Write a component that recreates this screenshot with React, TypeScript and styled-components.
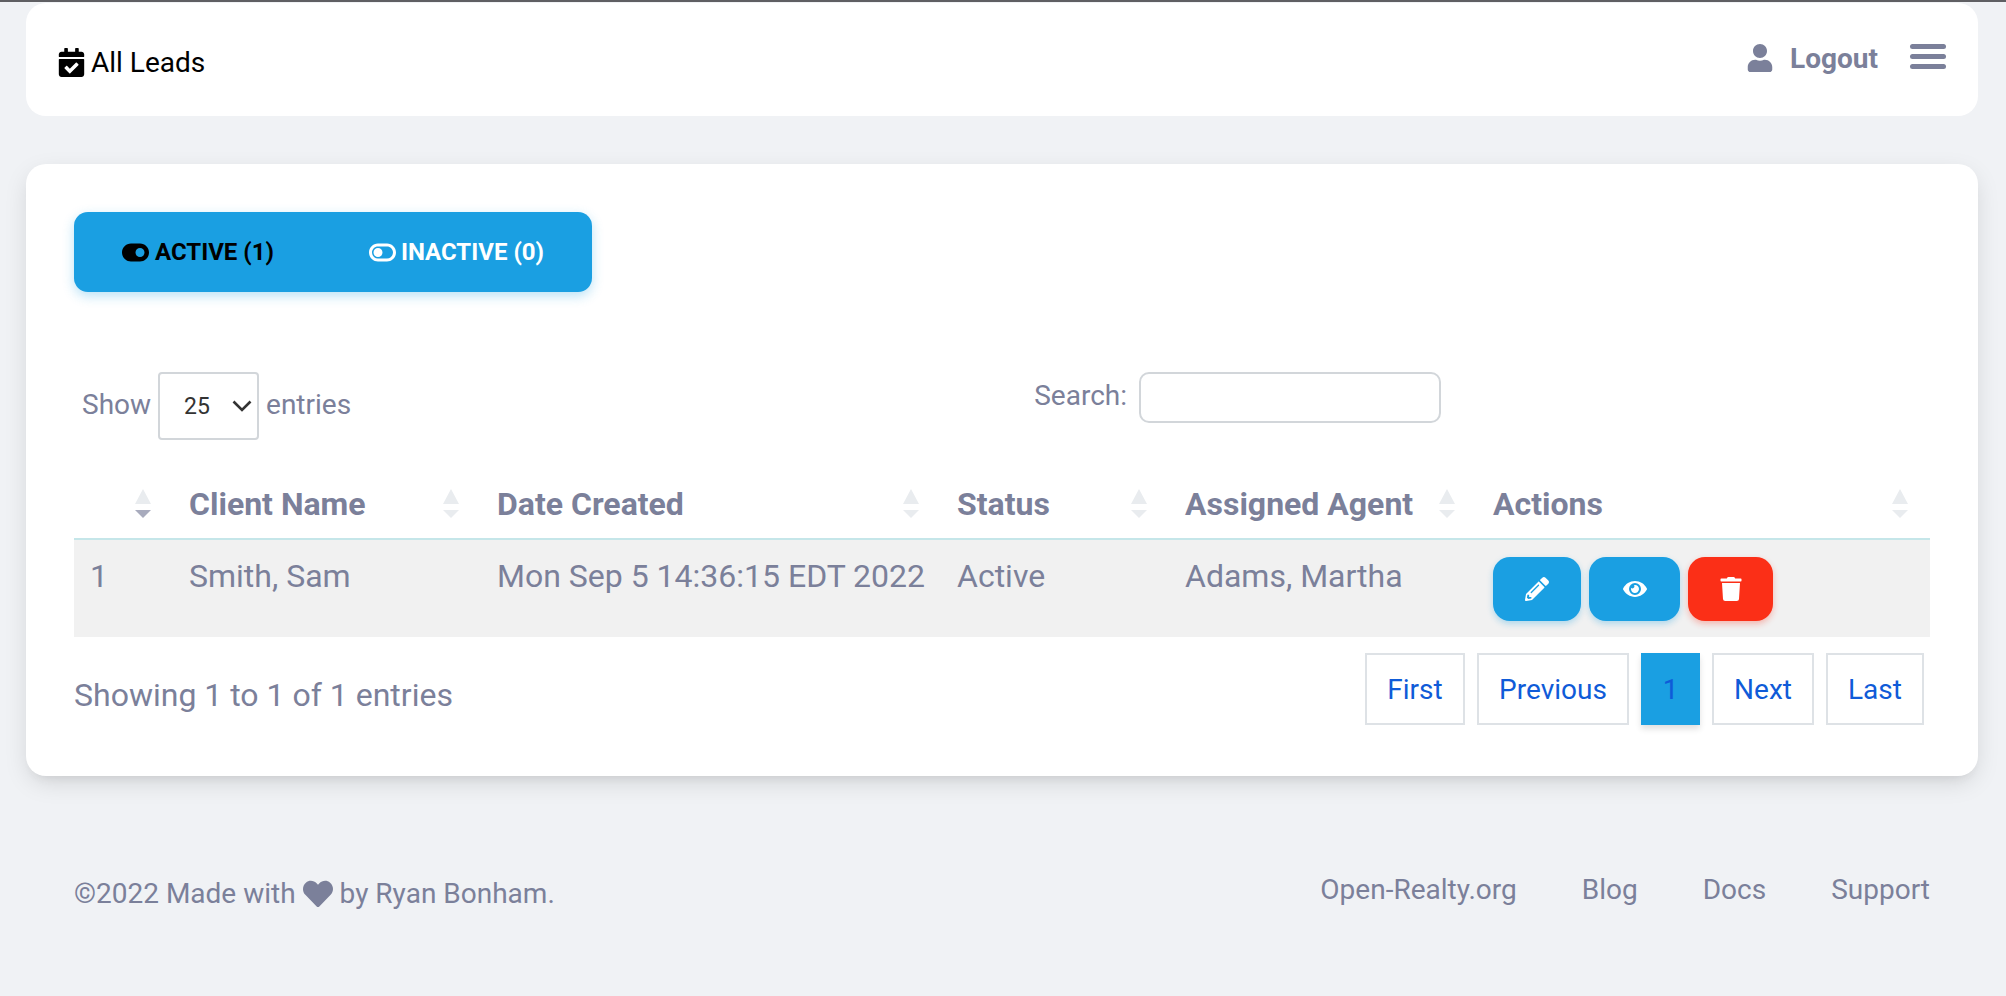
import styled, { createGlobalStyle } from 'styled-components';
import { FaCalendarCheck, FaEye, FaHeart, FaPencilAlt, FaTrash, FaUser } from 'react-icons/fa';
import { FaToggleOff, FaToggleOn } from 'react-icons/fa6';

const GlobalStyle = createGlobalStyle`
  html, body {
    margin: 0;
    padding: 0;
    background: #f0f2f5;
  }
  body {
    font-family: Roboto, "Liberation Sans", sans-serif;
    color: #7b809a;
  }
  * {
    box-sizing: border-box;
  }
`;

const Page = styled.div`
  min-height: 996px;
  border-top: 2px solid #5f5f63;
  padding: 1px 28px 0 26px;
`;

const Header = styled.header`
  height: 113px;
  background: #fff;
  border-radius: 20px;
  display: flex;
  align-items: center;
  justify-content: space-between;
  padding: 0 32px 0 32px;
`;

const PageTitle = styled.div`
  display: flex;
  align-items: center;
  gap: 5px;
  margin-left: -1px;
  color: #000;
  font-size: 28px;
  margin-top: 6px;
`;

const HeaderActions = styled.div`
  display: flex;
  align-items: center;
  margin-top: -6px;
`;

const LogoutLink = styled.a`
  display: flex;
  align-items: center;
  gap: 16px;
  margin-top: 3px;
  font-size: 28px;
  font-weight: 700;
  color: #7b809a;
`;

const Burger = styled.div`
  width: 36px;
  margin-left: 32px;
  display: flex;
  flex-direction: column;
  gap: 5px;
`;

const BurgerBar = styled.span`
  height: 5px;
  border-radius: 3px;
  background: #7b809a;
`;

const Card = styled.main`
  margin-top: 48px;
  height: 612px;
  background: #fff;
  border-radius: 20px;
  padding: 48px 48px 0;
  box-shadow: 0 8px 26px -4px rgba(20, 20, 20, 0.15), 0 8px 9px -5px rgba(20, 20, 20, 0.06);
`;

const Tabs = styled.div`
  display: inline-flex;
  height: 80px;
  background: #1a9fe2;
  border-radius: 14px;
  box-shadow: 0 4px 12px rgba(26, 159, 226, 0.3);
`;

const Tab = styled.div<{ $active?: boolean }>`
  display: flex;
  align-items: center;
  gap: ${(p) => (p.$active ? '6px' : '5px')};
  padding: ${(p) => (p.$active ? '0 47px 0 48px' : '0 48px')};
  font-size: 24px;
  font-weight: 700;
  color: ${(p) => (p.$active ? '#000' : '#fff')};
`;

const Toolbar = styled.div`
  display: flex;
  justify-content: space-between;
  align-items: flex-start;
  margin-top: 80px;
  padding: 0 489px 0 8px;
  height: 68px;
  font-size: 28px;
`;

const Length = styled.label`
  display: flex;
  align-items: center;
  gap: 7px;
  line-height: 30px;
`;

const LengthText = styled.span`
  margin-top: -2px;
`;

const SelectWrap = styled.span`
  position: relative;
  display: block;
`;

const LengthSelect = styled.select`
  display: block;
  appearance: none;
  width: 101px;
  height: 68px;
  padding: 0 0 0 24px;
  border: 2px solid #d2d6da;
  border-radius: 4px;
  background: #fff;
  color: #333;
  font: 400 23px Roboto, sans-serif;
`;

const Chevron = styled.svg`
  position: absolute;
  top: 28px;
  right: 7px;
  width: 20px;
  height: 12px;
  pointer-events: none;
`;

const SearchLabel = styled.label`
  display: flex;
  align-items: center;
  gap: 12px;
  line-height: 30px;
`;

const SearchText = styled.span`
  margin-top: -3px;
`;

const SearchInput = styled.input`
  width: 302px;
  height: 51px;
  border: 2px solid #d2d6da;
  border-radius: 10px;
  background: #fff;
`;

const Table = styled.table`
  width: 1856px;
  margin-top: 24px;
  border-collapse: collapse;
  table-layout: fixed;
`;

const HeadCell = styled.th`
  height: 75px;
  padding: 5px 22px 0 16px;
  border-bottom: 2px solid #c5e6e9;
  text-align: left;
  font-size: 32px;
  font-weight: 700;
`;

const HeadInner = styled.div`
  display: flex;
  align-items: center;
  justify-content: space-between;
  white-space: nowrap;
`;

const SortIcons = styled.span`
  display: flex;
  flex-direction: column;
  align-items: center;
  gap: 6px;
`;

const SortUp = styled.span`
  width: 0;
  height: 0;
  border-left: 8px solid transparent;
  border-right: 8px solid transparent;
  border-bottom: 15px solid #e9ecef;
`;

const SortDown = styled.span<{ $on?: boolean }>`
  width: 0;
  height: 0;
  border-left: 8px solid transparent;
  border-right: 8px solid transparent;
  border-top: 8px solid ${(p) => (p.$on ? '#a8abbd' : '#e9ecef')};
`;

const BodyRow = styled.tr`
  background: #f1f1f1;
`;

const BodyCell = styled.td`
  height: 98px;
  padding: 17px 0 0 16px;
  vertical-align: top;
  font-size: 32px;
  white-space: nowrap;
`;

const ActionCell = styled(BodyCell)`
  padding-top: 17px;
`;

const ActionRow = styled.div`
  display: flex;
  gap: 8px;
`;

const ActionButton = styled.button<{ $w: number; $danger?: boolean }>`
  width: ${(p) => p.$w}px;
  height: 64px;
  border: 0;
  border-radius: 17px;
  display: flex;
  align-items: center;
  justify-content: center;
  color: #fff;
  font-size: 24px;
  background: ${(p) => (p.$danger ? '#fb2f17' : '#1a9fe2')};
  box-shadow: 0 3px 6px ${(p) => (p.$danger ? 'rgba(251, 47, 23, 0.3)' : 'rgba(26, 159, 226, 0.3)')};
`;

const TableFooter = styled.div`
  display: flex;
  justify-content: space-between;
  align-items: center;
  margin-top: 16px;
  padding-right: 6px;
  height: 72px;
`;

const Info = styled.div`
  font-size: 32px;
  margin-top: 12px;
`;

const Pagination = styled.div`
  display: flex;
  gap: 12px;
`;

const PageButton = styled.a<{ $w: number; $active?: boolean }>`
  height: 72px;
  width: ${(p) => p.$w}px;
  display: flex;
  align-items: center;
  justify-content: center;
  font-size: 28px;
  color: #0f5bd8;
  border: 2px solid ${(p) => (p.$active ? '#1a9fe2' : '#dee2e6')};
  background: ${(p) => (p.$active ? '#1a9fe2' : '#fff')};
  box-shadow: ${(p) => (p.$active ? '0 4px 6px rgba(0, 0, 0, 0.12)' : 'none')};
`;

const Footer = styled.footer`
  display: flex;
  justify-content: space-between;
  align-items: flex-start;
  margin-top: 94px;
  padding: 0 48px;
`;

const Copyright = styled.div`
  display: flex;
  align-items: center;
  gap: 7px;
  font-size: 28px;
  margin-top: 7px;
`;

const FooterLinks = styled.nav`
  display: flex;
  gap: 65px;
  margin-top: 3px;
`;

const FooterLink = styled.a`
  font-size: 28px;
  color: #7b809a;
`;

const columns = [99, 308, 460, 228, 308, 453];
const titles = ['', 'Client Name', 'Date Created', 'Status', 'Assigned Agent', 'Actions'];

export default function App() {
  return (
    <Page>
      <GlobalStyle />
      <Header>
        <PageTitle>
          <FaCalendarCheck size={29} />
          All Leads
        </PageTitle>
        <HeaderActions>
          <LogoutLink>
            <FaUser size={28} />
            Logout
          </LogoutLink>
          <Burger>
            <BurgerBar />
            <BurgerBar />
            <BurgerBar />
          </Burger>
        </HeaderActions>
      </Header>

      <Card>
        <Tabs>
          <Tab $active>
            <FaToggleOn size={27} />
            ACTIVE (1)
          </Tab>
          <Tab>
            <FaToggleOff size={27} />
            INACTIVE (0)
          </Tab>
        </Tabs>

        <Toolbar>
          <Length>
            <LengthText>Show</LengthText>
            <SelectWrap>
              <LengthSelect defaultValue="25">
                <option>10</option>
                <option>25</option>
                <option>50</option>
              </LengthSelect>
              <Chevron viewBox="0 0 20 12" fill="none" stroke="#333" strokeWidth="2.6">
                <path d="M1.500 1.500 10 10l8.500-8.500" />
              </Chevron>
            </SelectWrap>
            <LengthText>entries</LengthText>
          </Length>
          <SearchLabel>
            <SearchText>Search:</SearchText>
            <SearchInput />
          </SearchLabel>
        </Toolbar>

        <Table>
          <colgroup>
            {columns.map((w, i) => (
              <col key={i} width={w} />
            ))}
          </colgroup>
          <thead>
            <tr>
              {titles.map((t, i) => (
                <HeadCell key={i}>
                  <HeadInner>
                    <span>{t}</span>
                    <SortIcons>
                      <SortUp />
                      <SortDown $on={i === 0} />
                    </SortIcons>
                  </HeadInner>
                </HeadCell>
              ))}
            </tr>
          </thead>
          <tbody>
            <BodyRow>
              <BodyCell>1</BodyCell>
              <BodyCell>Smith, Sam</BodyCell>
              <BodyCell>Mon Sep 5 14:36:15 EDT 2022</BodyCell>
              <BodyCell>Active</BodyCell>
              <BodyCell>Adams, Martha</BodyCell>
              <ActionCell>
                <ActionRow>
                  <ActionButton $w={88}>
                    <FaPencilAlt />
                  </ActionButton>
                  <ActionButton $w={91}>
                    <FaEye />
                  </ActionButton>
                  <ActionButton $w={85} $danger>
                    <FaTrash />
                  </ActionButton>
                </ActionRow>
              </ActionCell>
            </BodyRow>
          </tbody>
        </Table>

        <TableFooter>
          <Info>Showing 1 to 1 of 1 entries</Info>
          <Pagination>
            <PageButton $w={100}>First</PageButton>
            <PageButton $w={152}>Previous</PageButton>
            <PageButton $w={59} $active>1</PageButton>
            <PageButton $w={102}>Next</PageButton>
            <PageButton $w={98}>Last</PageButton>
          </Pagination>
        </TableFooter>
      </Card>

      <Footer>
        <Copyright>
          ©2022 Made with
          <FaHeart size={30} />
          by Ryan Bonham.
        </Copyright>
        <FooterLinks>
          <FooterLink>Open-Realty.org</FooterLink>
          <FooterLink>Blog</FooterLink>
          <FooterLink>Docs</FooterLink>
          <FooterLink>Support</FooterLink>
        </FooterLinks>
      </Footer>
    </Page>
  );
}
